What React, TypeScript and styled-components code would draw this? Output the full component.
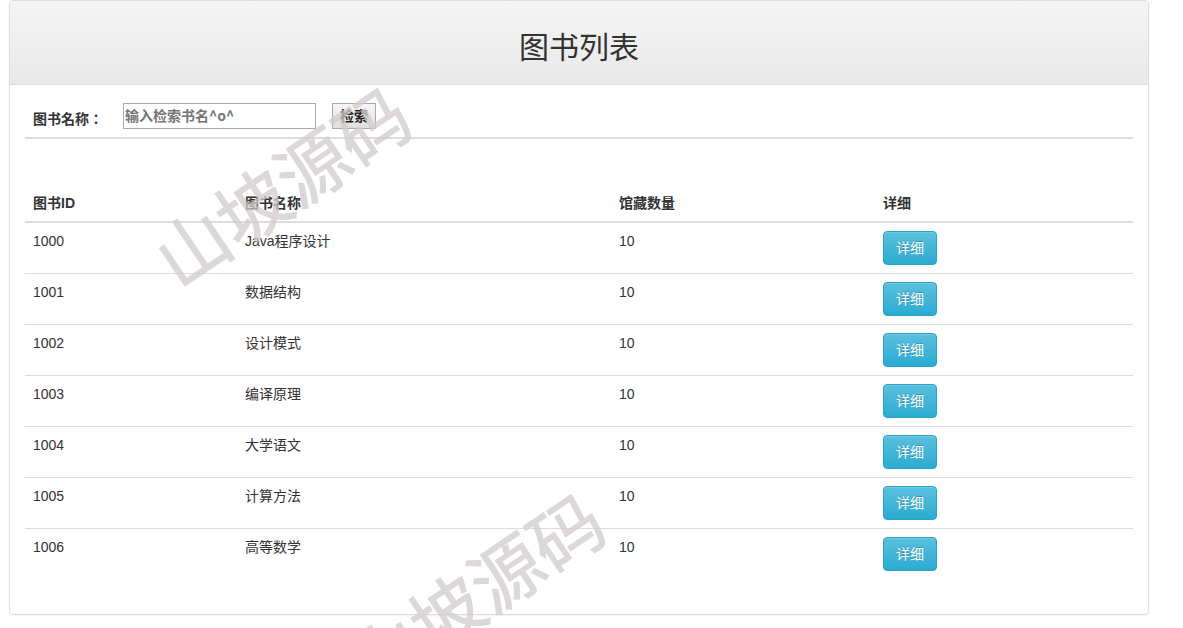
import React from "react";
import styled, { createGlobalStyle } from "styled-components";

const GlobalStyle = createGlobalStyle`
  *, *::before, *::after { box-sizing: border-box; }
  body {
    margin: 0;
    background: #fff;
    color: #333;
    font-family: "Liberation Sans", "Noto Sans CJK SC", sans-serif;
    font-size: 14px;
    line-height: 20px;
  }
`;

const Page = styled.div`
  position: relative;
  min-height: 100vh;
  padding: 0 34px 13px 9px;
  overflow: hidden;
`;

const Panel = styled.main`
  border: 1px solid #ddd;
  border-radius: 4px;
  box-shadow: 0 1px 2px rgba(0, 0, 0, 0.05);
`;

const PanelHeading = styled.header`
  padding: 30px 15px 20px;
  border-bottom: 1px solid #ddd;
  border-radius: 3px 3px 0 0;
  background: linear-gradient(to bottom, #f5f5f5, #e8e8e8);
  text-align: center;
`;

const Title = styled.h1`
  margin: 0;
  font-size: 30px;
  line-height: 33px;
  font-weight: 400;
`;

const PanelBody = styled.div`
  padding: 10px 15px 35px;
`;

const SearchForm = styled.form`
  display: flex;
  align-items: flex-end;
  margin-bottom: 46px;
  padding: 8px;
  border-bottom: 2px solid #ddd;
`;

const SearchLabel = styled.label`
  width: 90px;
  font-family: "Liberation Sans", "Noto Sans CJK TC", sans-serif;
  font-weight: 700;
`;

const SearchInput = styled.input`
  width: 193px;
  height: 26px;
  margin-right: 16px;
  padding: 0 1px 2px;
  border: 1px solid #a9a9a9;
  border-radius: 0;
  background: #fff;
  font: 700 14px "Noto Sans CJK SC", sans-serif;
  &::placeholder {
    color: #757575;
    opacity: 1;
  }
`;

const SearchButton = styled.button`
  width: 44px;
  height: 26px;
  padding: 0 0 2px;
  border: 1px solid #a9a9a9;
  border-radius: 0;
  background: linear-gradient(to bottom, #f6f6f6, #dedede);
  color: #222;
  font: 700 14px "Noto Sans CJK SC", sans-serif;
`;

const BookTable = styled.table`
  width: 100%;
  table-layout: fixed;
  border-spacing: 0;
`;

const Column = styled.col<{ $width: number }>`
  width: ${({ $width }) => $width}px;
`;

const HeadCell = styled.th`
  padding: 8px;
  border-bottom: 2px solid #ddd;
  text-align: left;
  font-weight: 700;
`;

const Cell = styled.td`
  padding: 8px;
  vertical-align: top;
  tr + tr > & {
    border-top: 1px solid #ddd;
  }
`;

const DetailButton = styled.button`
  display: block;
  height: 34px;
  padding: 0 12px;
  border: 1px solid #28a4c9;
  border-radius: 4px;
  background: linear-gradient(to bottom, #5bc0de, #2aabd2);
  box-shadow: inset 0 1px 0 rgba(255, 255, 255, 0.15);
  color: #fff;
  font: inherit;
  text-shadow: 0 -1px 0 rgba(0, 0, 0, 0.2);
  cursor: pointer;
`;

const Watermark = styled.div<{ $x: number; $y: number }>`
  position: absolute;
  left: ${({ $x }) => $x}px;
  top: ${({ $y }) => $y}px;
  color: #d2cccc;
  opacity: 0.75;
  -webkit-text-stroke: 1px #d2cccc;
  font-size: 72px;
  line-height: 80px;
  white-space: nowrap;
  transform: translate(-50%, -50%) rotate(-34deg);
  pointer-events: none;
  user-select: none;
`;

const books = [
  { id: 1000, name: "Java程序设计", count: 10 },
  { id: 1001, name: "数据结构", count: 10 },
  { id: 1002, name: "设计模式", count: 10 },
  { id: 1003, name: "编译原理", count: 10 },
  { id: 1004, name: "大学语文", count: 10 },
  { id: 1005, name: "计算方法", count: 10 },
  { id: 1006, name: "高等数学", count: 10 },
];

export default function App() {
  return (
    <Page>
      <GlobalStyle />
      <Panel>
        <PanelHeading>
          <Title>图书列表</Title>
        </PanelHeading>
        <PanelBody>
          <SearchForm onSubmit={(event) => event.preventDefault()}>
            <SearchLabel htmlFor="book-name">图书名称：</SearchLabel>
            <SearchInput id="book-name" type="text" placeholder="输入检索书名^o^" />
            <SearchButton type="submit">检索</SearchButton>
          </SearchForm>
          <BookTable>
            <colgroup>
              <Column $width={212} />
              <Column $width={374} />
              <Column $width={264} />
              <Column $width={258} />
            </colgroup>
            <thead>
              <tr>
                <HeadCell scope="col">图书ID</HeadCell>
                <HeadCell scope="col">图书名称</HeadCell>
                <HeadCell scope="col">馆藏数量</HeadCell>
                <HeadCell scope="col">详细</HeadCell>
              </tr>
            </thead>
            <tbody>
              {books.map((book) => (
                <tr key={book.id}>
                  <Cell>{book.id}</Cell>
                  <Cell>{book.name}</Cell>
                  <Cell>{book.count}</Cell>
                  <Cell>
                    <DetailButton type="button">详细</DetailButton>
                  </Cell>
                </tr>
              ))}
            </tbody>
          </BookTable>
        </PanelBody>
      </Panel>
      <Watermark aria-hidden="true" $x={284} $y={189}>山坡源码</Watermark>
      <Watermark aria-hidden="true" $x={478} $y={595}>山坡源码</Watermark>
    </Page>
  );
}
